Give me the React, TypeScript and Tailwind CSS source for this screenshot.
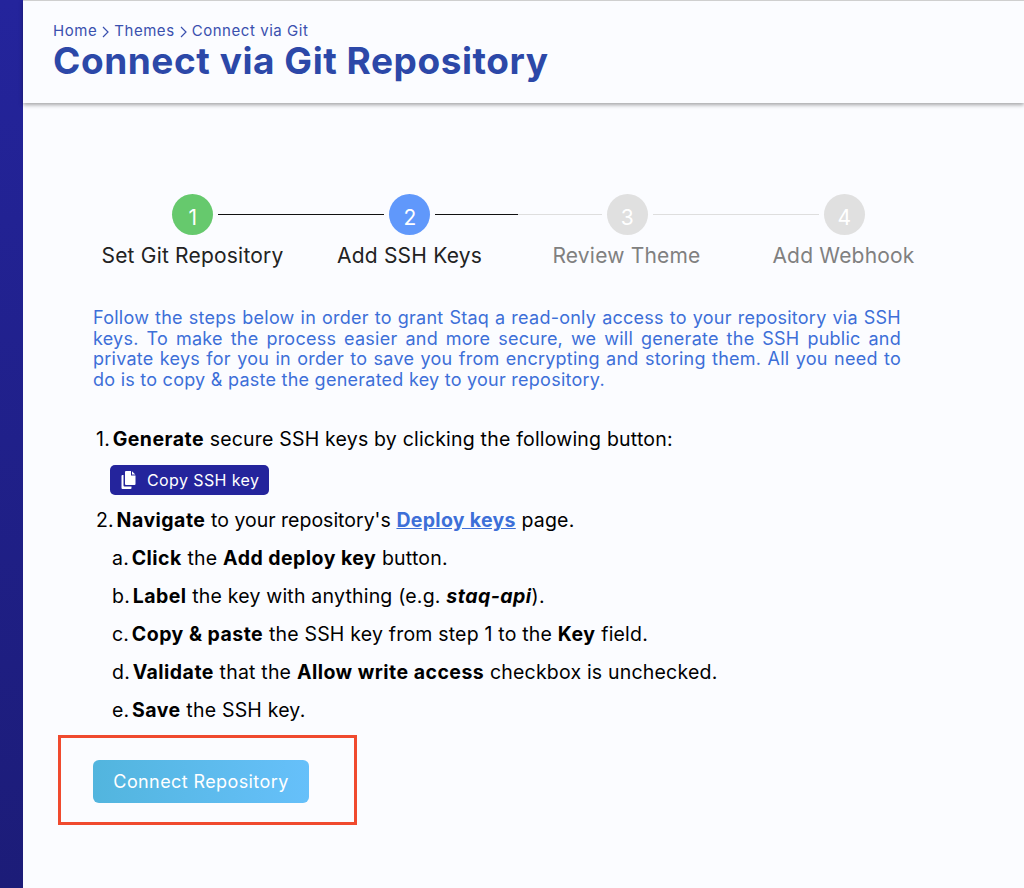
import React from "react";

const font = { fontFamily: "Inter, 'Open Sans', sans-serif" };

function Circle({ n, cls }: { n: number; cls: string }) {
  return (
    <div className={`flex h-[41px] w-[41px] shrink-0 items-center justify-center rounded-full pt-[5px] text-[21px] leading-none text-white ${cls}`}>
      {n}
    </div>
  );
}

function B({ children }: { children: React.ReactNode }) {
  return <b className="tracking-[0.47px]">{children}</b>;
}

function Row({ mark, children, cls }: { mark: string; children: React.ReactNode; cls?: string }) {
  return (
    <div className={`h-[38px] leading-[38px] whitespace-nowrap ${cls ?? ""}`}>
      <span className="mr-[-3px]">{mark} </span>
      {children}
    </div>
  );
}

function Chevron() {
  return (
    <svg width="7" height="12" viewBox="0 0 7 12" fill="none" stroke="currentColor" strokeWidth="1.2" className="mx-[5px] mt-[1px]">
      <path d="M1 1l5 5-5 5" />
    </svg>
  );
}

export default function App() {
  return (
    <div className="flex h-[888px] w-[1024px] overflow-hidden bg-[#fbfcff]" style={font}>
      <div className="w-[23px] shrink-0 bg-gradient-to-b from-[#24249c] to-[#1c1c78]" />
      <div className="flex min-w-0 flex-1 flex-col">
        <header className="h-[103px] shrink-0 border-t border-t-[#cfcfcf] pl-[30px] pt-[21px] shadow-[0_2px_4px_rgba(0,0,0,0.35)]">
          <div className="flex items-center text-[15px] leading-[18px] tracking-[0.55px] text-[#3a50ae]">
            <span>Home</span>
            <Chevron />
            <span>Themes</span>
            <Chevron />
            <span>Connect via Git</span>
          </div>
          <h1 className="whitespace-nowrap text-[37px] font-bold leading-[42px] tracking-[0.55px] text-[#2c48a8]">Connect via Git Repository</h1>
        </header>

        <div className="mt-[91px] flex items-center pl-[149.3px]">
          <Circle n={1} cls="bg-[#66c96d]" />
          <div className="mx-[5px] h-px w-[166.2px] bg-[#111]" />
          <Circle n={2} cls="bg-[#6098fb]" />
          <div className="mx-[5px] flex h-px w-[166.2px]">
            <div className="h-px w-[83px] bg-[#111]" />
            <div className="h-px flex-1 bg-[#dedede]" />
          </div>
          <Circle n={3} cls="bg-[#e0e0e0]" />
          <div className="mx-[5px] h-px w-[166.2px] bg-[#dedede]" />
          <Circle n={4} cls="bg-[#e0e0e0]" />
        </div>

        <div className="ml-[61px] mt-[8px] grid w-[868px] grid-cols-4 text-center text-[21px] leading-[26px] tracking-[0.2px]">
          <div className="text-[#222]">Set Git Repository</div>
          <div className="text-[#222]">Add SSH Keys</div>
          <div className="text-[#808080]">Review Theme</div>
          <div className="text-[#808080]">Add Webhook</div>
        </div>

        <p className="ml-[70px] mt-[39px] w-[808px] text-justify text-[18px] leading-[20.5px] tracking-[0.25px] text-[#3d6fd8]">
          Follow the steps below in order to grant Staq a read-only access to your repository via SSH keys. To make the process easier and more secure, we will generate the SSH public and private keys for you in order to save you from encrypting and storing them. All you need to do is to copy &amp; paste the generated key to your repository.
        </p>

        <div className="ml-[73px] mt-[30px] text-[19.5px] tracking-[0.2px] text-black">
          <Row mark="1."><B>Generate</B> secure SSH keys by clicking the following button:</Row>
          <button className="ml-[14px] mt-[7px] flex h-[30px] w-[159px] items-center rounded-[5px] bg-[#24249c] pl-[11px] text-[16px] tracking-[0.4px] text-white">
            <svg width="15" height="18" viewBox="0 0 15 18" className="mr-[11px]" fill="currentColor">
              <path d="M5 0h5v4.500h4.500V13a1 1 0 0 1-1 1H5a1 1 0 0 1-1-1V1a1 1 0 0 1 1-1z" />
              <path d="M11 .2 14.300 3.500H11z" />
              <path d="M2.500 4v10.500A1 1 0 0 0 3.500 15.500H10.500V17a1 1 0 0 1-1 1H1.500a1 1 0 0 1-1-1V5a1 1 0 0 1 1-1z" />
            </svg>
            Copy SSH key
          </button>
          <Row mark="2." cls="mt-[6px]"><B>Navigate</B> <span className="tracking-normal">to your repository's</span> <a className="font-bold tracking-[0.3px] text-[#3d6fd8] underline">Deploy keys</a> page.</Row>
          <div className="ml-[16px]">
            <Row mark="a."><B>Click</B> the <B>Add deploy key</B> button.</Row>
            <Row mark="b."><B>Label</B> the key with anything (e.g. <b className="tracking-[0.47px]"><i>staq-api</i></b>).</Row>
            <Row mark="c."><B>Copy &amp; paste</B> the SSH key from step 1 to the <B>Key</B> field.</Row>
            <Row mark="d."><B>Validate</B> that the <B>Allow write access</B> checkbox is unchecked.</Row>
            <Row mark="e."><B>Save</B> the SSH key.</Row>
          </div>
        </div>

        <div className="ml-[35px] mt-[6px] h-[90px] w-[299px] border-[3px] border-[#f04a2e] pl-[32px] pt-[22px]">
          <button className="h-[43px] w-[216px] rounded-[6px] bg-gradient-to-r from-[#52b5de] to-[#66c0fa] text-[18px] tracking-[0.4px] text-white">
            Connect Repository
          </button>
        </div>
      </div>
    </div>
  );
}
